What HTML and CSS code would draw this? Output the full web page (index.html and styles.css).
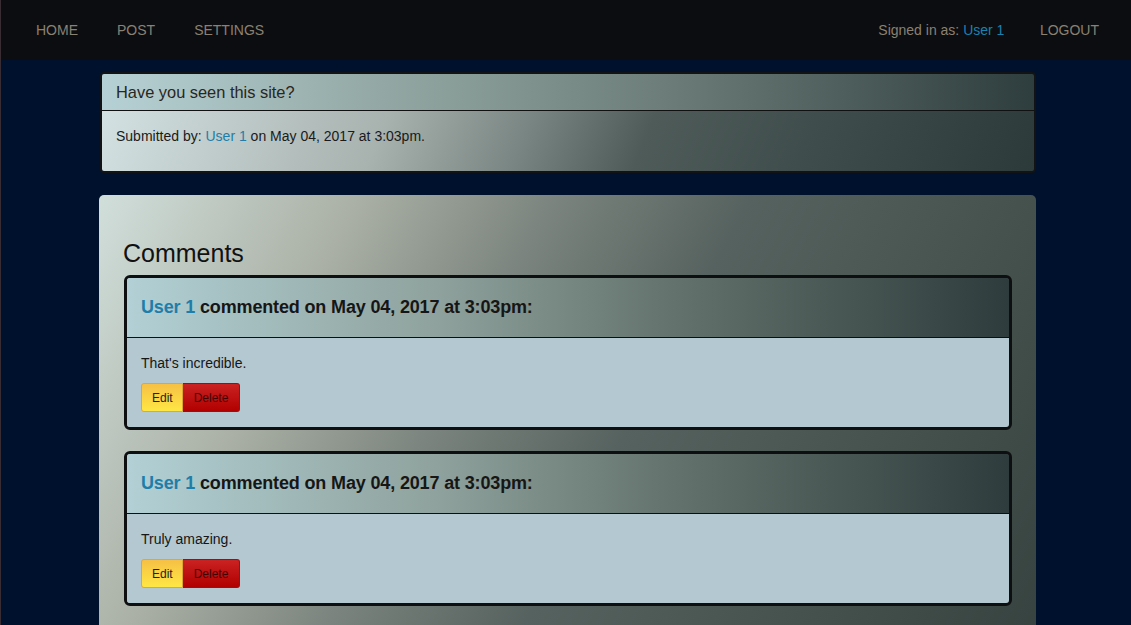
FILE: index.html
```html
<!DOCTYPE html>
<html lang="en">
<head>
<meta charset="utf-8">
<title>Post</title>
<link rel="stylesheet" href="styles.css">
</head>
<body>
<nav class="navbar">
  <ul class="nav nav-left">
    <li><a href="#">HOME</a></li>
    <li><a href="#">POST</a></li>
    <li><a href="#">SETTINGS</a></li>
  </ul>
  <ul class="nav nav-right">
    <li class="signed">Signed in as: <a class="user" href="#">User 1</a></li>
    <li><a href="#">LOGOUT</a></li>
  </ul>
</nav>
<main class="container">
  <section class="panel post">
    <div class="panel-heading">Have you seen this site?</div>
    <div class="panel-body">
      <p>Submitted by: <a class="user" href="#">User 1</a> on May 04, 2017 at 3:03pm.</p>
    </div>
  </section>
  <section class="well">
    <h3 class="comments-title">Comments</h3>
    <div class="comment">
      <div class="comment-heading"><a class="user" href="#">User 1</a> commented on May 04, 2017 at 3:03pm:</div>
      <div class="comment-body">
        <p>That's incredible.</p>
        <div class="btn-group">
          <button class="btn btn-edit">Edit</button><button class="btn btn-delete">Delete</button>
        </div>
      </div>
    </div>
    <div class="comment">
      <div class="comment-heading"><a class="user" href="#">User 1</a> commented on May 04, 2017 at 3:03pm:</div>
      <div class="comment-body">
        <p>Truly amazing.</p>
        <div class="btn-group">
          <button class="btn btn-edit">Edit</button><button class="btn btn-delete">Delete</button>
        </div>
      </div>
    </div>
  </section>
</main>
</body>
</html>
```
FILE: styles.css
```css
* { box-sizing: border-box; }
html, body { margin: 0; padding: 0; }
body {
  background: #00112e;
  font-family: "Liberation Sans", Arial, sans-serif;
  font-size: 14px;
  line-height: 20px;
  color: #1a1a1a;
  border-left: 1px solid #3a2c33;
  min-height: 625px;
  overflow: hidden;
}
a { text-decoration: none; }
.user { color: #1f7ea9; }
p { margin: 0; }

.navbar {
  height: 60px;
  background: #0c0d10;
  display: flex;
  justify-content: space-between;
  align-items: center;
  padding: 0 10px 0 15px;
}
.nav {
  list-style: none;
  margin: 0;
  padding: 0;
  display: flex;
  align-items: center;
}
.nav li { display: block; }
.nav a, .signed {
  display: block;
  padding: 0 19.5px;
  color: #8a8172;
  font-size: 14px;
  line-height: 20px;
}
.nav-left li:first-child a { padding-left: 20px; }
.signed .user { display: inline; padding: 0; color: #1a82ad; }
.nav-right li + li a { padding-left: 16px; padding-right: 22px; }

.container {
  width: 937px;
  margin: 12px 0 0 98px;
}

.panel {
  border: 2px solid #111314;
  border-radius: 4px;
  overflow: hidden;
  margin-bottom: 22px;
  margin-left: 1px;
}
.panel-heading {
  height: 37px;
  padding: 0 14px;
  line-height: 37px;
  font-size: 16.4px;
  color: #2a2621;
  border-bottom: 1px solid #111;
  background: linear-gradient(to right, #b6d1d5 0%, #93a8a4 30%, #6d7e7a 60%, #2e3d3d 100%);
}
.panel-body {
  padding: 15px 14px 15px;
  height: 60px;
  background: linear-gradient(112deg, #d3e1e2 0%, #a8b2af 30%, #7a8683 45%, #4e5b59 58%, #3f4d4c 75%, #2d3a3a 100%);
}

.well {
  border-radius: 5px;
  padding: 40px 24px 40px 24px;
  min-height: 460px;
  background: linear-gradient(118deg, #d1dfdb 0%, #aab0a5 22%, #7c857f 38%, #56625f 55%, #48544f 75%, #36423f 100%);
}
.comments-title {
  margin: 0 0 4px 0;
  font-size: 25px;
  line-height: 36px;
  font-weight: normal;
  color: #111;
}

.comment {
  border: 3px solid #0e0f10;
  border-radius: 6px;
  overflow: hidden;
  margin-bottom: 21px;
  margin-left: 1px;
}
.comment-heading {
  height: 60px;
  line-height: 59px;
  padding: 0 14px;
  font-size: 18px;
  font-weight: bold;
  letter-spacing: -0.15px;
  color: #161616;
  border-bottom: 1px solid #0e0f10;
  background: linear-gradient(to right, #b2d0d5 0%, #8fa29d 35%, #66756f 60%, #4a5855 80%, #2e3c3d 100%);
}
.comment-body {
  background: #b3c8d0;
  padding: 15px 14px 15px;
}
.comment-body p { margin-bottom: 10px; color: #161616; }
.btn-group { display: flex; }
.btn {
  font-family: "Liberation Sans", Arial, sans-serif;
  font-size: 12px;
  line-height: 18px;
  height: 29px;
  padding: 5px 10px;
  margin: 0;
  cursor: pointer;
}
.btn-edit {
  background: linear-gradient(to bottom, #f6c045, #ffe744);
  border: 1px solid #e0a735;
  border-radius: 3px 0 0 3px;
  color: #222;
  width: 42px;
}
.btn-delete {
  background: linear-gradient(to bottom, #ca2222, #b20000);
  border: 1px solid #a80a0a;
  border-left: none;
  border-radius: 0 3px 3px 0;
  color: #3e0505;
  width: 57px;
}
```
